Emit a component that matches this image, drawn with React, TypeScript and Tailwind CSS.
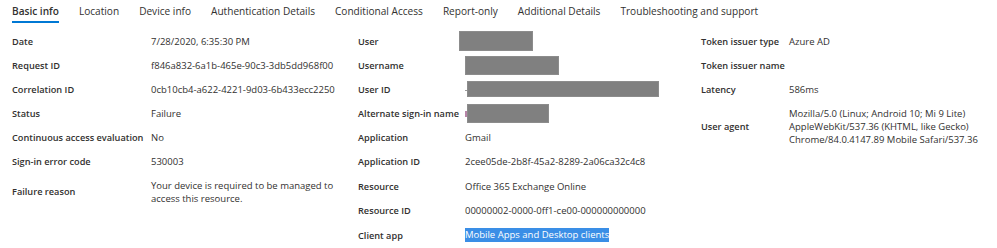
import React from "react";

const font = { fontFamily: '"Open Sans", "Noto Sans", sans-serif' };

function Row({ label, children, labelW }: { label: string; children?: React.ReactNode; labelW: string }) {
  return (
    <div className="flex items-center py-[5.5px] leading-[13px]">
      <div className={`${labelW} shrink-0 font-semibold text-[9.2px] text-[#323130]`}>{label}</div>
      <div className="text-[#323130]">{children}</div>
    </div>
  );
}

function Label({ children }: { children: React.ReactNode }) {
  return <div className="w-[107px] shrink-0 font-semibold text-[9.2px] text-[#323130]">{children}</div>;
}

function Redact({ w, h, ml = "ml-0" }: { w: string; h: string; ml?: string }) {
  return <span className={`inline-block align-middle bg-[#808080] border border-[#8c8c8c] ${w} ${h} ${ml}`} />;
}

export default function App() {
  const tabs = [
    "Basic info",
    "Location",
    "Device info",
    "Authentication Details",
    "Conditional Access",
    "Report-only",
    "Additional Details",
    "Troubleshooting and support",
  ];
  return (
    <div className="w-[997px] h-[248px] bg-white overflow-hidden text-[9.5px]" style={font}>
      <div className="flex gap-[20px] pl-[12px] h-[24px] text-[10.1px] text-[#323130]">
        {tabs.map((t, i) => (
          <div key={t} className="relative flex items-center h-full">
            <span className={i === 0 ? "font-semibold" : ""}>{t}</span>
            {i === 0 && <div className="absolute left-0 right-0 bottom-[1px] h-[2px] bg-[#0078d4]" />}
          </div>
        ))}
      </div>
      <div className="flex pl-[12px] pt-[5px]">
        <div className="w-[346px] shrink-0">
          <Row label="Date" labelW="w-[139px]">7/28/2020, 6:35:30 PM</Row>
          <Row label="Request ID" labelW="w-[139px]">f846a832-6a1b-465e-90c3-3db5dd968f00</Row>
          <Row label="Correlation ID" labelW="w-[139px]">0cb10cb4-a622-4221-9d03-6b433ecc2250</Row>
          <Row label="Status" labelW="w-[139px]">Failure</Row>
          <Row label="Continuous access evaluation" labelW="w-[139px]">No</Row>
          <Row label="Sign-in error code" labelW="w-[139px]">530003</Row>
          <Row label="Failure reason" labelW="w-[139px]">
            Your device is required to be managed to
            <br />
            access this resource.
          </Row>
        </div>
        <div className="w-[343px] shrink-0">
          <div className="flex items-center h-[24px] leading-[13px]">
            <Label>User</Label>
            <Redact w="w-[74px]" h="h-[20px]" ml="-ml-[6px]" />
          </div>
          <div className="flex items-center h-[24px] leading-[13px]">
            <Label>Username</Label>
            <Redact w="w-[94px]" h="h-[19px]" />
          </div>
          <div className="flex items-center h-[24px] leading-[13px]">
            <Label>User ID</Label>
            <span className="inline-block w-[2px] h-[1px] bg-[#999] mt-[2px]" />
            <Redact w="w-[192px]" h="h-[16px]" />
          </div>
          <div className="flex items-center h-[24px] leading-[13px]">
            <Label>Alternate sign-in name</Label>
            <span className="inline-block w-[2px] h-[6px] bg-[#b784a7] mt-[2px]" />
            <Redact w="w-[82px]" h="h-[19px]" />
          </div>
          <div className="flex items-center h-[24.5px] leading-[13px]">
            <Label>Application</Label>
            <div className="text-[#323130]">Gmail</div>
          </div>
          <div className="flex items-center h-[24.5px] leading-[13px]">
            <Label>Application ID</Label>
            <div className="text-[#323130]">2cee05de-2b8f-45a2-8289-2a06ca32c4c8</div>
          </div>
          <div className="flex items-center h-[24.5px] leading-[13px]">
            <Label>Resource</Label>
            <div className="text-[#323130]">Office 365 Exchange Online</div>
          </div>
          <div className="flex items-center h-[24.5px] leading-[13px]">
            <Label>Resource ID</Label>
            <div className="text-[#323130]">00000002-0000-0ff1-ce00-000000000000</div>
          </div>
          <div className="flex items-center h-[24.5px] leading-[13px]">
            <Label>Client app</Label>
            <div className="bg-[#3a8ee6] text-white leading-[14px]">Mobile Apps and Desktop clients</div>
          </div>
        </div>
        <div className="flex-1">
          <Row label="Token issuer type" labelW="w-[88px]">Azure AD</Row>
          <Row label="Token issuer name" labelW="w-[88px]"></Row>
          <Row label="Latency" labelW="w-[88px]">586ms</Row>
          <Row label="User agent" labelW="w-[88px]">
            Mozilla/5.0 (Linux; Android 10; Mi 9 Lite)
            <br />
            AppleWebKit/537.36 (KHTML, like Gecko)
            <br />
            Chrome/84.0.4147.89 Mobile Safari/537.36
          </Row>
        </div>
      </div>
    </div>
  );
}
